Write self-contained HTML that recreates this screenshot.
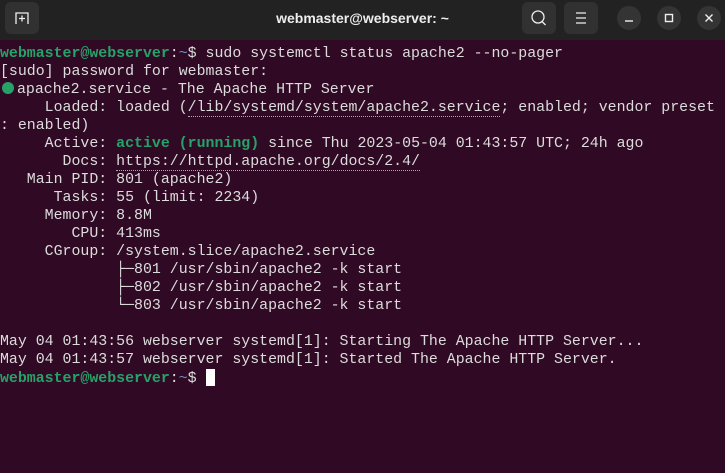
<!DOCTYPE html>
<html><head><meta charset="utf-8"><style>
html,body{margin:0;padding:0;}
body{width:725px;height:473px;background:#300a24;overflow:hidden;position:relative;}
.hdr{position:absolute;left:0;top:0;width:725px;height:40px;background:#222222;}
.btn{position:absolute;top:2px;width:34px;height:32px;background:#313131;border-radius:6px;}
.circ{position:absolute;top:6px;width:24px;height:24px;border-radius:50%;background:#343434;}
.title{position:absolute;left:0;width:725px;top:10px;text-align:center;color:#eee;font:bold 14px "Liberation Sans",sans-serif;}
pre{position:absolute;left:0;top:45px;margin:0;font-family:"Liberation Mono","DejaVu Sans Mono",monospace;font-size:14.9px;line-height:18px;color:#dcdcdc;white-space:pre;}
.g{color:#26a269;font-weight:bold;}
.b{color:#6a8fc8;}
.u{border-bottom:1px dotted #aaa;}
.dot{display:inline-block;width:12px;height:12px;border-radius:50%;background:#26a269;vertical-align:-1px;margin-right:3px;margin-left:2px}
.cur{display:inline-block;width:9px;height:17px;background:#fff;vertical-align:-4px;}
</style></head><body>
<div class="hdr">
<div class="btn" style="left:5px"><svg width="34" height="32"><path d="M11 22V11h12v11" stroke="#eee" stroke-width="1.3" fill="none"/><path d="M17 13.5v6M14 16.5h6" stroke="#eee" stroke-width="1.3"/></svg></div>
<div class="title">webmaster@webserver: ~</div>
<div class="btn" style="left:522px"><svg width="34" height="32"><circle cx="16" cy="15" r="6" stroke="#eee" stroke-width="1.3" fill="none"/><path d="M20 19.5l3.5 3.5" stroke="#eee" stroke-width="1.3"/></svg></div>
<div class="btn" style="left:564px"><svg width="34" height="32"><path d="M12 11h10M12 16h10M12 21h10" stroke="#eee" stroke-width="1.2"/></svg></div>
<div class="circ" style="left:617px"><svg width="24" height="24"><path d="M8 15h8" stroke="#eee" stroke-width="1.4"/></svg></div>
<div class="circ" style="left:657px"><svg width="24" height="24"><rect x="8.5" y="8.5" width="7" height="7" stroke="#eee" stroke-width="1.4" fill="none"/></svg></div>
<div class="circ" style="left:697px"><svg width="24" height="24"><path d="M8.5 8.5l7 7M15.5 8.5l-7 7" stroke="#eee" stroke-width="1.4"/></svg></div>
</div>
<pre><span class="g">webmaster@webserver</span>:<span class="b">~</span>$ sudo systemctl status apache2 --no-pager
[sudo] password for webmaster:
<span class="dot"></span>apache2.service - The Apache HTTP Server
     Loaded: loaded (<span class="u">/lib/systemd/system/apache2.service</span>; enabled; vendor preset
: enabled)
     Active: <span class="g">active (running)</span> since Thu 2023-05-04 01:43:57 UTC; 24h ago
       Docs: <span class="u">https://httpd.apache.org/docs/2.4/</span>
   Main PID: 801 (apache2)
      Tasks: 55 (limit: 2234)
     Memory: 8.8M
        CPU: 413ms
     CGroup: /system.slice/apache2.service
             ├─801 /usr/sbin/apache2 -k start
             ├─802 /usr/sbin/apache2 -k start
             └─803 /usr/sbin/apache2 -k start

May 04 01:43:56 webserver systemd[1]: Starting The Apache HTTP Server...
May 04 01:43:57 webserver systemd[1]: Started The Apache HTTP Server.
<span class="g">webmaster@webserver</span>:<span class="b">~</span>$ <span class="cur"></span></pre>
</body></html>
